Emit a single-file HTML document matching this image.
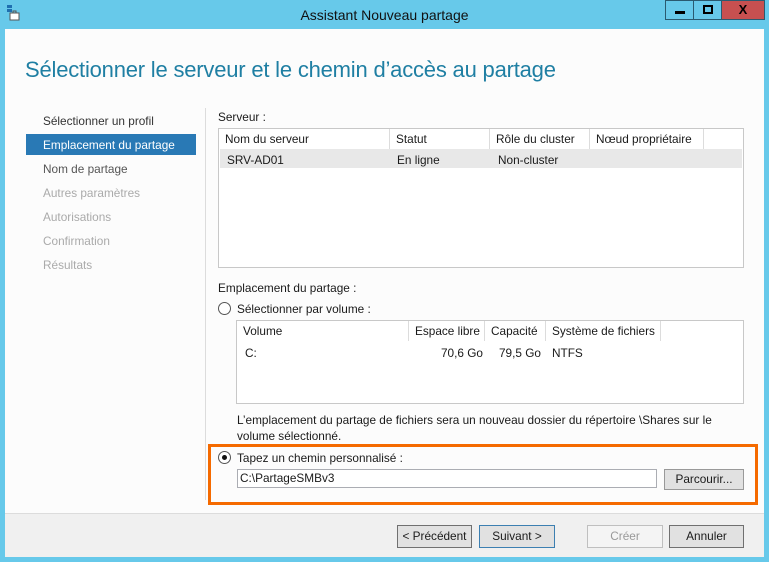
<!DOCTYPE html>
<html><head><meta charset="utf-8"><style>
*{margin:0;padding:0;box-sizing:border-box}
body{width:769px;height:562px;background:#67c9ea;font-family:"Liberation Sans",sans-serif;font-size:11.8px;color:#1a1a1a;position:relative;overflow:hidden}
.a{position:absolute;white-space:nowrap}
.client{position:absolute;left:5px;top:29px;width:759px;height:528px;background:#fcfcfc}
.foot{position:absolute;left:5px;top:513px;width:759px;height:44px;background:#f0f0f0;border-top:1px solid #dcdcdc}
.btn{position:absolute;height:23px;border:1px solid #707070;background:#e1e1e1;text-align:center;line-height:21px}
.tb{position:absolute;top:0;height:20px;border:1px solid #2a5a70;}
.tbl{position:absolute;border:1px solid #c8c8c8;background:#fff}
.hd{position:absolute;top:0;height:20px;border-right:1px solid #dcdcdc;line-height:19px;padding-left:6px}
.nav{position:absolute;left:43px;color:#333}
.dis{color:#aaa}
</style></head><body>
<div class="client"></div>
<svg class="a" style="left:6px;top:5px" width="14" height="16"><rect x="1" y="0" width="5" height="3" fill="#1e6fb0"/><rect x="1" y="4" width="5" height="3" fill="#1e6fb0"/><rect x="4" y="8" width="9" height="7" fill="#fff" stroke="#555"/><rect x="7" y="6" width="3" height="2" fill="none" stroke="#555"/></svg>
<div class="a" style="left:0;width:769px;top:7px;text-align:center;font-size:14px;color:#111">Assistant Nouveau partage</div>
<div class="tb" style="left:665px;width:29px;background:#67c9ea"><div class="a" style="left:9px;top:10px;width:10px;height:3px;background:#000"></div></div>
<div class="tb" style="left:693px;width:29px;background:#67c9ea"><div class="a" style="left:9px;top:4px;width:10px;height:9px;border:2px solid #000"></div></div>
<div class="tb" style="left:721px;width:44px;background:#c75050;color:#000;font-weight:bold;text-align:center;line-height:18px;font-size:13px">X</div>
<div class="a" style="left:25px;top:57px;font-size:22px;letter-spacing:-0.2px;color:#1f7fa3">Sélectionner le serveur et le chemin d’accès au partage</div>
<div class="nav" style="top:114px">Sélectionner un profil</div>
<div class="a" style="left:26px;top:134px;width:170px;height:21px;background:#2979b5"></div>
<div class="nav" style="top:138px;color:#fff">Emplacement du partage</div>
<div class="nav" style="top:162px;color:#555">Nom de partage</div>
<div class="nav dis" style="top:186px">Autres paramètres</div>
<div class="nav dis" style="top:210px">Autorisations</div>
<div class="nav dis" style="top:234px">Confirmation</div>
<div class="nav dis" style="top:258px">Résultats</div>
<div class="a" style="left:205px;top:108px;width:1px;height:392px;background:#dcdcdc"></div>
<div class="a" style="left:218px;top:110px">Serveur :</div>
<div class="tbl" style="left:218px;top:128px;width:526px;height:140px">
<div class="hd" style="left:0;width:171px;padding-top:1px">Nom du serveur</div>
<div class="hd" style="left:171px;width:100px;padding-top:1px">Statut</div>
<div class="hd" style="left:271px;width:100px;padding-top:1px">Rôle du cluster</div>
<div class="hd" style="left:371px;width:114px;padding-top:1px">Nœud propriétaire</div>
<div class="a" style="left:1px;top:20px;width:522px;height:19px;background:#e8e8e8"></div>
<div class="a" style="left:8px;top:24px">SRV-AD01</div>
<div class="a" style="left:178px;top:24px">En ligne</div>
<div class="a" style="left:279px;top:24px">Non-cluster</div>
</div>
<div class="a" style="left:218px;top:281px">Emplacement du partage :</div>
<div class="a" style="left:218px;top:302px;width:13px;height:13px;border:1px solid #555;border-radius:50%;background:#fff"></div>
<div class="a" style="left:237px;top:302px">Sélectionner par volume :</div>
<div class="tbl" style="left:236px;top:320px;width:508px;height:84px">
<div class="hd" style="left:0;width:172px;padding-top:1px">Volume</div>
<div class="hd" style="left:172px;width:76px;padding-top:1px">Espace libre</div>
<div class="hd" style="left:248px;width:61px;padding-top:1px">Capacité</div>
<div class="hd" style="left:309px;width:115px;padding-top:1px">Système de fichiers</div>
<div class="a" style="left:8px;top:25px">C:</div>
<div class="a" style="left:204px;top:25px">70,6 Go</div>
<div class="a" style="left:262px;top:25px">79,5 Go</div>
<div class="a" style="left:315px;top:25px">NTFS</div>
</div>
<div class="a" style="left:237px;top:413px">L’emplacement du partage de fichiers sera un nouveau dossier du répertoire \Shares sur le</div>
<div class="a" style="left:237px;top:429px">volume sélectionné.</div>
<div class="a" style="left:208px;top:444px;width:550px;height:61px;border:3px solid #f56a00"></div>
<div class="a" style="left:218px;top:451px;width:13px;height:13px;border:1px solid #555;border-radius:50%;background:#fff"><div class="a" style="left:3px;top:3px;width:5px;height:5px;border-radius:50%;background:#111"></div></div>
<div class="a" style="left:237px;top:451px">Tapez un chemin personnalisé :</div>
<div class="a" style="left:237px;top:469px;width:420px;height:19px;border:1px solid #abadb3;background:#fff;padding-left:2px;line-height:17px">C:\PartageSMBv3</div>
<div class="btn" style="left:664px;top:469px;width:80px;height:21px;line-height:19px;border-color:#999">Parcourir...</div>
<div class="foot"></div>
<div class="btn" style="left:397px;top:525px;width:75px">&lt; Précédent</div>
<div class="btn" style="left:479px;top:525px;width:76px;border-color:#3c7fb1">Suivant &gt;</div>
<div class="btn" style="left:587px;top:525px;width:76px;border-color:#bfbfbf;background:#f4f4f4;color:#999">Créer</div>
<div class="btn" style="left:669px;top:525px;width:75px">Annuler</div>
</body></html>
